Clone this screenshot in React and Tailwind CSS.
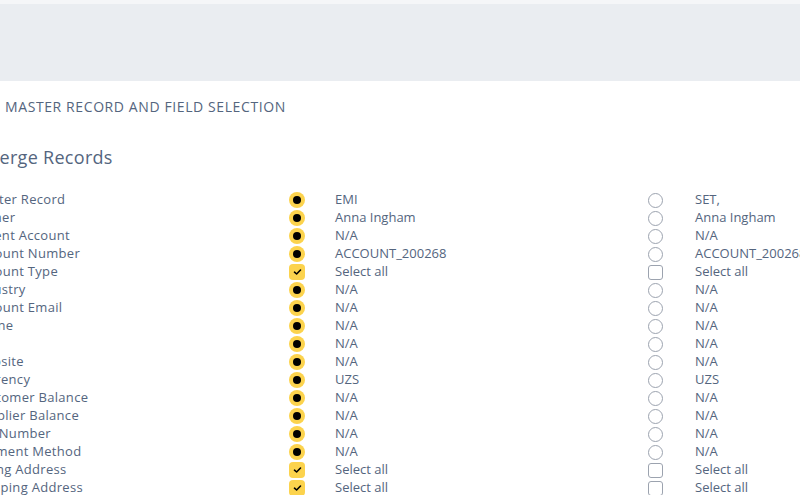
import React from 'react';

const rows = [
  { label: 'Master Record', a: 'EMI', b: 'SET,', type: 'radio' },
  { label: 'Owner', a: 'Anna Ingham', b: 'Anna Ingham', type: 'radio' },
  { label: 'Parent Account', a: 'N/A', b: 'N/A', type: 'radio' },
  { label: 'Account Number', a: 'ACCOUNT_200268', b: 'ACCOUNT_200268', type: 'radio' },
  { label: 'Account Type', a: 'Select all', b: 'Select all', type: 'check' },
  { label: 'Industry', a: 'N/A', b: 'N/A', type: 'radio' },
  { label: 'Account Email', a: 'N/A', b: 'N/A', type: 'radio' },
  { label: 'Phone', a: 'N/A', b: 'N/A', type: 'radio' },
  { label: 'Fax', a: 'N/A', b: 'N/A', type: 'radio' },
  { label: 'Website', a: 'N/A', b: 'N/A', type: 'radio' },
  { label: 'Currency', a: 'UZS', b: 'UZS', type: 'radio' },
  { label: 'Customer Balance', a: 'N/A', b: 'N/A', type: 'radio' },
  { label: 'Supplier Balance', a: 'N/A', b: 'N/A', type: 'radio' },
  { label: 'Tax Number', a: 'N/A', b: 'N/A', type: 'radio' },
  { label: 'Payment Method', a: 'N/A', b: 'N/A', type: 'radio' },
  { label: 'Billing Address', a: 'Select all', b: 'Select all', type: 'check' },
  { label: 'Shipping Address', a: 'Select all', b: 'Select all', type: 'check' },
];

const Selected = ({ type }) =>
  type === 'radio' ? (
    <span className="flex h-4 w-4 items-center justify-center rounded-full bg-[#fcd34d]">
      <span className="h-2 w-2 rounded-full bg-black" />
    </span>
  ) : (
    <span className="flex h-4 w-4 items-center justify-center rounded-[4px] bg-[#fcd34d]">
      <svg width="9" height="8" viewBox="0 0 9 8" fill="none">
        <path d="M1.5 4.2 L3.6 6 L7.5 2" stroke="black" strokeWidth="1.6" strokeLinecap="round" strokeLinejoin="round" />
      </svg>
    </span>
  );

const Empty = ({ type }) => (
  <span
    className={
      'block h-[15px] w-[15px] border border-[#9ca3af] bg-white ' +
      (type === 'radio' ? 'rounded-full' : 'rounded-[3px]')
    }
  />
);

const App = () => {
  return (
    <div className="h-[495px] w-[800px] overflow-hidden bg-white text-[#54657e]" style={{ fontFamily: '"Open Sans", "Liberation Sans", sans-serif' }}>
      <div className="h-[4px] bg-[#f5f6f8]" />
      <div className="h-[77px] bg-[#eaedf1]" />

      <div className="pl-[5px] pt-[17px] text-[14px] leading-[18px] tracking-[0.6px]">
        MASTER RECORD AND FIELD SELECTION
      </div>

      <h2 className="-ml-[17px] mt-[30px] text-[18px] leading-[22px] tracking-[0.3px]">Merge Records</h2>

      <div className="-ml-[27px] mt-[23px] whitespace-nowrap text-[13px]">
        {rows.map((r) => (
          <div key={r.label} className="flex h-[18px] items-center">
            <div className="w-[316px] shrink-0 tracking-[0.3px]">{r.label}</div>
            <div className="w-[46px] shrink-0">
              <Selected type={r.type} />
            </div>
            <div className="w-[313px] shrink-0">{r.a}</div>
            <div className="w-[47px] shrink-0">
              <Empty type={r.type} />
            </div>
            <div className="shrink-0">{r.b}</div>
          </div>
        ))}
      </div>
    </div>
  );
};

export default App;
